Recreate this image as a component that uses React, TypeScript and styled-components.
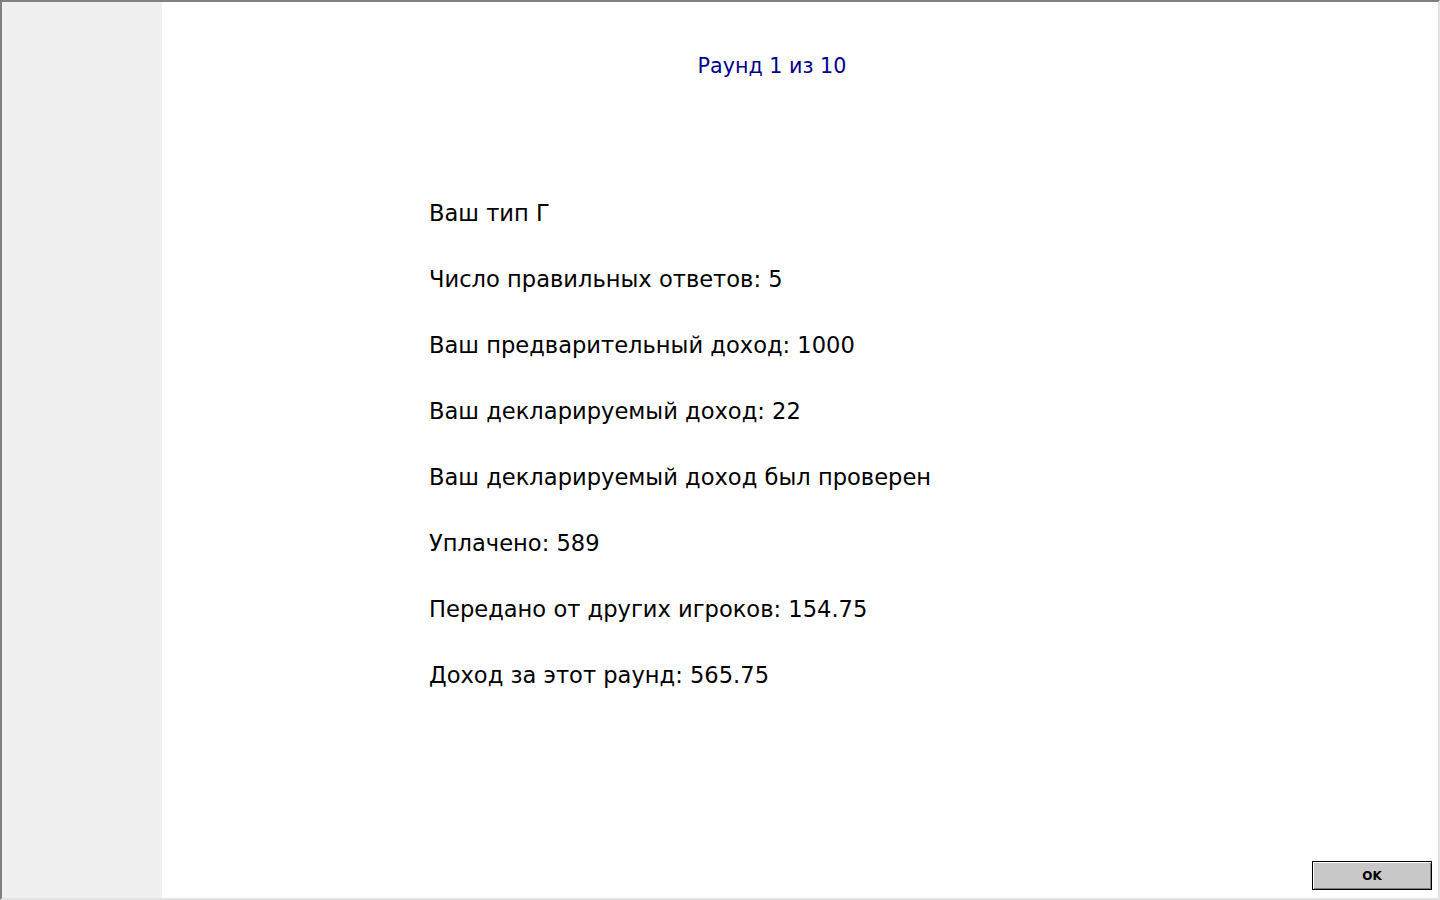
import React from "react";
import styled, { createGlobalStyle } from "styled-components";

const Global = createGlobalStyle`
  html, body { margin: 0; padding: 0; background: #ffffff; }
  body { font-family: "DejaVu Sans", Verdana, sans-serif; }
`;

const Frame = styled.div`
  box-sizing: border-box;
  width: 1440px;
  height: 900px;
  border-top: 2px solid #808080;
  border-left: 2px solid #808080;
  border-right: 2px solid #e3e3e3;
  border-bottom: 2px solid #e3e3e3;
  display: grid;
  grid-template-columns: 160px 1fr;
  overflow: hidden;
`;

const Side = styled.div`
  background: #f0f0f0;
`;

const Main = styled.div`
  position: relative;
  background: #ffffff;
  display: flex;
  flex-direction: column;
`;

const Title = styled.div`
  margin-top: 50px;
  padding-right: 56px;
  text-align: center;
  color: #00008b;
  font-size: 20.7px;
  line-height: 28px;
`;

const List = styled.div`
  margin-top: 119px;
  padding-left: 267px;
  display: flex;
  flex-direction: column;
  gap: 38px;
`;

const Line = styled.div`
  color: #000000;
  font-size: 22.6px;
  line-height: 28px;
`;

const OkButton = styled.button`
  position: absolute;
  right: 6px;
  bottom: 8px;
  width: 120px;
  height: 29px;
  box-sizing: border-box;
  background: #c8c8c8;
  border: 1px solid #000000;
  box-shadow: inset 1px 1px 0 #ffffff, inset -1px -1px 0 #808080;
  font-family: "DejaVu Sans", Verdana, sans-serif;
  font-weight: bold;
  font-size: 12px;
  color: #000000;
  padding: 0;
`;

const lines = [
  "Ваш тип Г",
  "Число правильных ответов: 5",
  "Ваш предварительный доход: 1000",
  "Ваш декларируемый доход: 22",
  "Ваш декларируемый доход был проверен",
  "Уплачено: 589",
  "Передано от других игроков: 154.75",
  "Доход за этот раунд: 565.75",
];

export default function App() {
  return (
    <>
      <Global />
      <Frame>
        <Side />
        <Main>
          <Title>Раунд 1 из 10</Title>
          <List>
            {lines.map((l) => (
              <Line key={l}>{l}</Line>
            ))}
          </List>
          <OkButton>OK</OkButton>
        </Main>
      </Frame>
    </>
  );
}
